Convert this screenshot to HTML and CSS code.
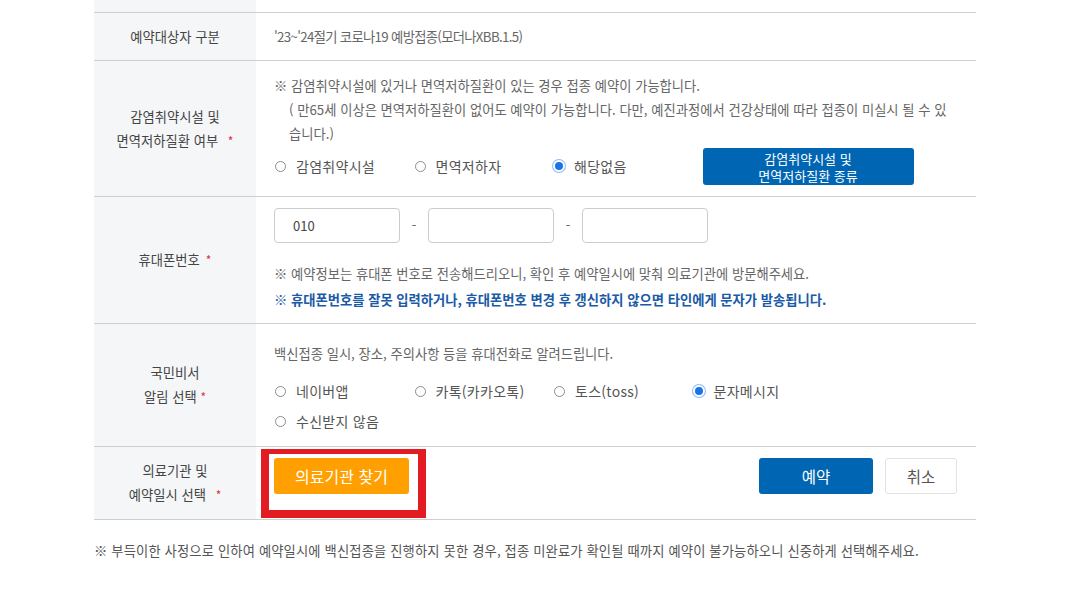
FILE: index.html
```html
<!DOCTYPE html>
<html lang="ko">
<head>
<meta charset="utf-8">
<title>예약</title>
<link rel="stylesheet" href="styles.css">
</head>
<body>
<div class="form">
  <div class="row row-top">
    <div class="th"></div>
    <div class="td"></div>
  </div>

  <div class="row row-target">
    <div class="th">예약대상자 구분</div>
    <div class="td"><p class="muted">'23~'24절기 코로나19 예방접종(모더나XBB.1.5)</p></div>
  </div>

  <div class="row row-risk">
    <div class="th"><p>감염취약시설 및<br>면역저하질환 여부 <span class="req">*</span></p></div>
    <div class="td">
      <p class="note">※ 감염취약시설에 있거나 면역저하질환이 있는 경우 접종 예약이 가능합니다.</p>
      <p class="note indent">( 만65세 이상은 면역저하질환이 없어도 예약이 가능합니다. 다만, 예진과정에서 건강상태에 따라 접종이 미실시 될 수 있습니다.)</p>
      <div class="choice-line">
        <div class="radios">
          <label class="opt"><span class="radio"></span>감염취약시설</label>
          <label class="opt"><span class="radio"></span>면역저하자</label>
          <label class="opt"><span class="radio on"></span>해당없음</label>
        </div>
        <button class="btn-kind">감염취약시설 및<br>면역저하질환 종류</button>
      </div>
    </div>
  </div>

  <div class="row row-phone">
    <div class="th">휴대폰번호 <span class="req">*</span></div>
    <div class="td">
      <div class="phone">
        <div class="inp">010</div>
        <span class="dash">-</span>
        <div class="inp"></div>
        <span class="dash">-</span>
        <div class="inp"></div>
      </div>
      <div class="phone-notes">
        <p class="note">※ 예약정보는 휴대폰 번호로 전송해드리오니, 확인 후 예약일시에 맞춰 의료기관에 방문해주세요.</p>
        <p class="note warn">※ <b>휴대폰번호를 잘못 입력하거나, 휴대폰번호 변경 후 갱신하지 않으면 타인에게 문자가 발송됩니다.</b></p>
      </div>
    </div>
  </div>

  <div class="row row-alert">
    <div class="th"><p>국민비서<br>알림 선택 <span class="req tight">*</span></p></div>
    <div class="td">
      <p class="note">백신접종 일시, 장소, 주의사항 등을 휴대전화로 알려드립니다.</p>
      <div class="radios wrap">
        <label class="opt"><span class="radio"></span>네이버앱</label>
        <label class="opt"><span class="radio"></span>카톡(카카오톡)</label>
        <label class="opt"><span class="radio"></span>토스(toss)</label>
        <label class="opt"><span class="radio on"></span>문자메시지</label>
        <label class="opt"><span class="radio"></span>수신받지 않음</label>
      </div>
    </div>
  </div>

  <div class="row row-hosp">
    <div class="th"><p>의료기관 및<br>예약일시 선택 <span class="req">*</span></p></div>
    <div class="td">
      <div class="find-wrap">
        <button class="btn-find">의료기관 찾기</button>
        <span class="highlight"></span>
      </div>
      <div class="actions">
        <button class="btn-ok">예약</button>
        <button class="btn-cancel">취소</button>
      </div>
    </div>
  </div>
</div>
<p class="footnote">※ 부득이한 사정으로 인하여 예약일시에 백신접종을 진행하지 못한 경우, 접종 미완료가 확인될 때까지 예약이 불가능하오니 신중하게 선택해주세요.</p>
</body>
</html>
```

FILE: styles.css
```css
* { box-sizing: border-box; }
html, body { margin: 0; padding: 0; background: #fff; }
body {
  font-family: "Noto Sans CJK KR", "Noto Sans", sans-serif;
  font-size: 13.3px;
  color: #555;
  letter-spacing: 0;
}
p { margin: 0; }
button { font-family: inherit; letter-spacing: inherit; cursor: pointer; }

.form {
  margin-left: 94px;
  width: 882px;
}
.row {
  display: grid;
  grid-template-columns: 162px 1fr;
  border-bottom: 1px solid #cfcfcf;
}
.th {
  background: #f5f6f8;
  color: #444;
  display: flex;
  align-items: center;
  justify-content: center;
  text-align: center;
  line-height: 24px;
}
.td { padding: 0 19px 0 18px; }
.req { color: #e0313b; margin-left: 6px; font-size: 12px; }
.req.tight { margin-left: 0; }

.row-top .th, .row-top .td { height: 12px; }

.row-target .td { padding-top: 14px; padding-bottom: 14px; line-height: 19px; }
.muted { color: #666; letter-spacing: -0.05em; }

.note { line-height: 24px; color: #666; }
.indent { padding-left: 15px; padding-right: 6px; }
.row-risk .td { padding-top: 13px; padding-bottom: 12px; }

.choice-line {
  display: flex;
  align-items: center;
  margin-top: 2px;
  height: 36px;
}
.radios { display: flex; width: 418.5px; flex: none; }
.radios.wrap { flex-wrap: wrap; width: 560px; margin-top: 10px; }
.opt {
  width: 139.5px;
  height: 30px;
  display: flex;
  align-items: center;
  color: #555;
  font-size: 14px;
  letter-spacing: 0.02em;
}
.radio {
  width: 11px;
  height: 11px;
  border: 1px solid #8d8d8d;
  border-radius: 50%;
  margin: 0 10px 0 1px;
  flex: none;
}
.radio.on {
  width: 12px;
  height: 12px;
  border: 2px solid #fff;
  background: #1a73e8;
  box-shadow: 0 0 0 1px #8dbdf5;
  margin: 0 9px 0 0;
}
.btn-kind {
  margin-left: 10px;
  width: 211px;
  height: 37px;
  flex: none;
  border: 0;
  border-radius: 3px;
  background: #0066b3;
  color: #fff;
  font-size: 13px;
  line-height: 17px;
  padding: 1px 0 0;
}

.row-phone .td { padding-top: 11px; padding-bottom: 10px; }
.phone { display: flex; align-items: center; }
.inp {
  width: 126px;
  height: 35px;
  border: 1px solid #cccccc;
  border-radius: 4px;
  padding: 0 18px;
  line-height: 33px;
  color: #444;
  font-size: 13px;
}
.dash { width: 28px; text-align: center; color: #666; }
.phone-notes { margin-top: 18px; }
.phone-notes .note { line-height: 26px; }
.note.warn { color: #1a5aa6; }
.note.warn b { font-weight: 700; }

.row-alert .td { padding-top: 18px; padding-bottom: 10px; }

.row-hosp .td {
  padding-top: 11px;
  padding-bottom: 25px;
  display: flex;
  justify-content: space-between;
  align-items: flex-start;
}
.find-wrap { position: relative; }
.btn-find {
  width: 135px;
  height: 36px;
  border: 0;
  border-radius: 3px;
  background: #ffa000;
  color: #fff;
  font-size: 16px;
  display: block;
}
.highlight {
  position: absolute;
  left: -13px;
  top: -9px;
  width: 165px;
  height: 69px;
  border: solid #e31b23;
  border-width: 5px 8px 8px 8px;
  pointer-events: none;
}
.actions { display: flex; gap: 12px; }
.btn-ok {
  width: 114px;
  height: 36px;
  border: 0;
  border-radius: 3px;
  background: #0066b3;
  color: #fff;
  font-size: 15.5px;
}
.btn-cancel {
  width: 72px;
  height: 36px;
  border: 1px solid #e3e3e3;
  border-radius: 3px;
  background: #fff;
  color: #555;
  font-size: 15.5px;
}

.footnote {
  margin: 21px 0 0 94px;
  line-height: 20px;
  color: #555;
  letter-spacing: 0.01em;
}
```
